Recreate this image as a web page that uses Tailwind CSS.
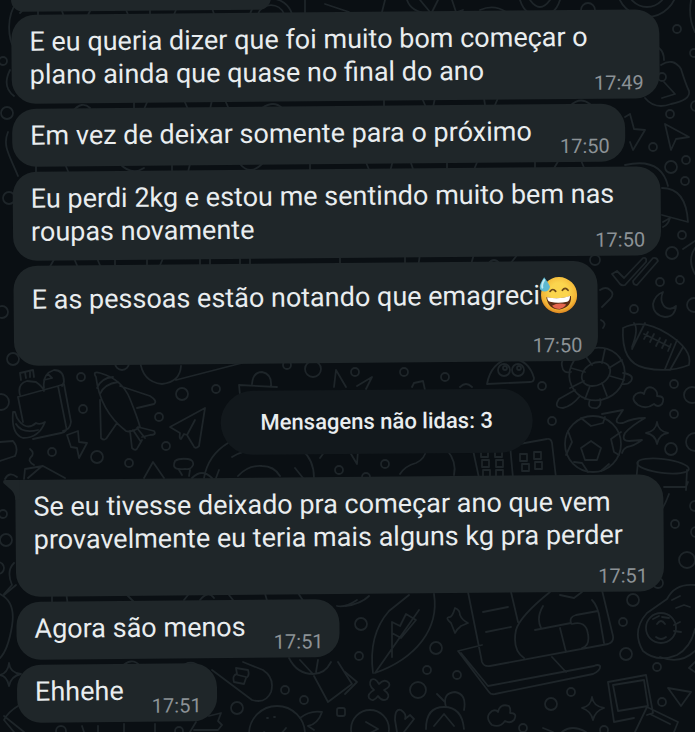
<!DOCTYPE html>
<html lang="pt-BR">
<head>
    <meta charset="UTF-8">
    <meta name="viewport" content="width=device-width, initial-scale=1.0">
    <title>Conversa</title>
    <script src="https://cdn.jsdelivr.net/npm/@tailwindcss/browser@4"></script>
</head>
<body class="bg-[#0a0f13] font-['Roboto',sans-serif]">
    <main class="relative min-h-screen overflow-hidden">

        <!-- wallpaper -->
        <svg class="absolute inset-0 w-full h-full" viewBox="0 0 695 732" preserveAspectRatio="xMidYMin slice" fill="none" stroke="#1e2529" stroke-width="1.8" stroke-linecap="round" stroke-linejoin="round" aria-hidden="true">
            <!-- small circles -->
            <circle cx="3" cy="61" r="4"/><circle cx="7" cy="113" r="6"/><circle cx="9" cy="198" r="6"/><circle cx="2" cy="312" r="6"/><circle cx="13" cy="359" r="6"/><circle cx="1" cy="402" r="8"/>
            <circle cx="81" cy="377" r="4"/><circle cx="83" cy="409" r="4"/><circle cx="52" cy="452" r="4"/><circle cx="97" cy="457" r="6"/><circle cx="129" cy="463" r="4"/><circle cx="166" cy="446" r="4"/>
            <circle cx="159" cy="417" r="4"/><circle cx="182" cy="394" r="6"/><circle cx="216" cy="389" r="4"/><circle cx="313" cy="369" r="8"/><circle cx="287" cy="365" r="4"/><circle cx="122" cy="363" r="7"/><circle cx="339" cy="470" r="4"/>
            <circle cx="677" cy="29" r="4"/><circle cx="694" cy="53" r="4"/><circle cx="670" cy="114" r="4"/><circle cx="653" cy="147" r="4"/><circle cx="671" cy="167" r="6"/><circle cx="686" cy="160" r="4"/><circle cx="685" cy="181" r="4"/><circle cx="682" cy="235" r="4"/><circle cx="696" cy="106" r="5"/>
            <circle cx="672" cy="253" r="6"/><circle cx="660" cy="282" r="4"/><circle cx="680" cy="280" r="4"/><circle cx="634" cy="309" r="4"/><circle cx="595" cy="260" r="5"/><circle cx="355" cy="372" r="4"/><circle cx="404" cy="372" r="4"/><circle cx="445" cy="377" r="4"/><circle cx="542" cy="386" r="4"/>
            <circle cx="674" cy="384" r="4"/><circle cx="674" cy="414" r="4"/><circle cx="692" cy="395" r="8"/><circle cx="694" cy="305" r="7"/><circle cx="552" cy="421" r="4"/><circle cx="671" cy="449" r="6"/><circle cx="695" cy="442" r="9"/><circle cx="385" cy="464" r="4"/><circle cx="366" cy="477" r="4"/>
            <circle cx="3" cy="514" r="4"/><circle cx="6" cy="540" r="6"/><circle cx="-2" cy="568" r="6"/><circle cx="675" cy="524" r="4"/><circle cx="695" cy="506" r="5"/><circle cx="687" cy="560" r="8"/><circle cx="696" cy="532" r="5"/><circle cx="633" cy="600" r="6"/><circle cx="658" cy="583" r="5"/><circle cx="623" cy="622" r="4"/><circle cx="626" cy="654" r="6"/><circle cx="657" cy="667" r="4"/>
            <circle cx="361" cy="624" r="6"/><circle cx="359" cy="656" r="4"/><circle cx="436" cy="648" r="6"/><circle cx="427" cy="670" r="4"/><circle cx="457" cy="675" r="4"/><circle cx="418" cy="690" r="8"/><circle cx="571" cy="692" r="4"/><circle cx="551" cy="704" r="6"/><circle cx="662" cy="702" r="4"/><circle cx="523" cy="728" r="4"/><circle cx="604" cy="730" r="4"/>
            <circle cx="285" cy="690" r="4"/><circle cx="304" cy="700" r="4"/><circle cx="237" cy="708" r="6"/><rect x="337" y="708" width="8" height="8" rx="2"/><circle cx="61" cy="731" r="5"/><circle cx="179" cy="731" r="4"/>
            <!-- top edge -->
            <path d="M17 2C6 16 8 38 14 48M10 70c-6 12-4 20 4 26M8 132c-6 14 2 24 10 44M250 14a22 22 0 0 1 42 0M258 14a14 14 0 0 1 26 0M305 0v14M325 4l24 8M385 0l-3 12M407 0q4 12 22 14t34-4M420 0l10 12M438 0l-6 12M452 0l4 12M480 10q14-6 26 2M520 0q5 16 20 16t20-16M530 0q10 14 20 0"/>
            <circle cx="588" cy="10" r="7"/><circle cx="647" cy="-13" r="30"/><circle cx="647" cy="-13" r="20"/><path d="M691 0q-3 18 4 32"/>
            <!-- marks between bubbles -->
            <path d="M20 13l6-6M38 5v12M60 5l4 12M93 5l-6 12M124 5l5 12M150 5v12M178 5l-5 12M211 5l4 12M72 112q10-12 18-4M134 100v14M148 100l-6 14M184 100l6 14M212 100l-3 14M225 100l6 14M262 108q12-8 20 0M384 98v12M422 98l6 14M435 98l-3 14M484 98l2 14M498 98l-6 14M570 106q10-10 20-2M36 164v12M65 164l5 12M120 164q12 12 24 4M172 164v12M190 164l-3 12M240 164q10 12 22 0M310 160v12M365 160l5 12M393 160l-3 12M410 160l4 12M447 160v12M478 160l-5 12M535 158v12M560 158l-7 12M580 158l5 12M48 270l8-14M73 256l6 14M96 256l6 14M115 256v14M147 256v14M158 270l6-14M200 256v14M210 256v14M240 256v14M250 256v14M340 254v14M405 254v14M420 254l-2 14M474 254l-4 14M488 264q6-8 12 0M510 264l8-10M52 592v14M66 592l2 14M122 590l14 14M184 600l8-10M200 600q8-10 14-2M225 590l8 10M264 590l4 14M296 590l8 12M120 668q12-12 20-2M180 668q8-8 16-4"/>
            <!-- lock, bolt, pointer, umbrella -->
            <path d="M659 48q5 4 5 12M661 65q12-8 20 4q5 16 8 22q2 9-18 13q-16 6-26-6"/><circle cx="662" cy="77" r="4"/><path d="M664 82l11 12-13 4M630 114l4 15 11 1-12 20-3-8M625 117l5-3M665 124l24 13-13 2-5 11zM625 165q36-8 43 21M662 188q24 0 26 34l-26-7M663 222l7-4q-2 7-7 9M695 241l-12 8"/>
            <!-- double check, moon, heart -->
            <path d="M612 274l5-3 7 7 19-20q4-1 3 4l-21 23q-3 1-5-1zM633 281l20-23q4-1 5 3l-21 24q-4 0-4-4M663 292q-4 9 2 15 6 4 11-1-1 11-11 11-12-2-12-13 2-9 10-12zM600 290q6-4 10 0 5 4 0 9l-8 8M601 320q6 3 2 8M695 248q-8 12 0 26"/>
            <!-- american football -->
            <path d="M623 328q20-10 45 6t21 31q-20 8-44 3t-22-40zM634 323q5 6-2 24M645 323l-13 26M677 340l-12 29M683 347l-13 23M644 334l26 13M648 332l-4 7M654 334l-4 8M660 338l-4 8M666 340l-4 8M671 344l-3 7"/>
            <!-- turtle -->
            <ellipse cx="597" cy="374" rx="28" ry="26" transform="rotate(-25 597 374)"/><ellipse cx="596" cy="374" rx="15" ry="11" transform="rotate(-28 596 374)"/><path d="M584 381l-14 7M590 386l-5 13M602 383l5 13M610 376l14 4M609 368l13-8M602 363l3-14M592 365l-8-11M585 372l-14-4M574 360q-14-4-12 6 1 8 9 6M575 390l-16 9q-6 9 4 9 9-2 17-12M590 400q-4 9 7 8 5-3 3-9M623 373q12 2 8 8-3 4-9 3"/>
            <!-- cloud, ghost, stars -->
            <path d="M638 405q-8-6-2-11 5-3 8 0 2-9 9-6 5 3 4 8 9 0 5 8-4 4-8 0-8 6-16 1zM487 384q4-22 24-26 18 2 23 20 0 4-4 4zM357 386l15-9-6 12M412 387l2-4 9-2 2 9M460 387q6-6 12 0"/><circle cx="504" cy="370" r="6"/><circle cx="518" cy="370" r="6"/><circle cx="505" cy="368" r="2"/><circle cx="519" cy="368" r="2"/>
            <!-- soccer ball with flames -->
            <circle cx="593" cy="444" r="28"/><path d="M591 441l10 7-4 12h-12l-4-12zM581 418l10 8 12-3 2-6M621 432l-10 7 3 13 5 3M568 431l4 11-6 13M574 462l8 1 6 9M601 471l8-7M602 414l21-4-6 9q-2 5 6 4 10-5 22-5-14 8-20 15-4 8 4 8l13-1q-8 6-15 7-4 2-5 6"/>
            <path d="M657 422q1 9 11 11-9 1-11 11-1-9-11-11 10-2 11-11z"/>
            <!-- drum, dominoes -->
            <path d="M638 462l-2 20M687 470l-1 20M660 492l-9 28q10-4 18-26M664 487h22l2-5"/><ellipse cx="663" cy="466" rx="26" ry="7" transform="rotate(7 663 466)"/><path d="M473 450l6 28M510 445l3 33M508 446l39-7q4-1 5 4l4 35"/>
            <path d="M481 450h7v7h-7zM495 450h7v7h-7zM482 460h7v7h-7zM496 460h7v7h-7zM483 470h7v7h-7zM496 470h7v7h-7zM520 454h7v7h-7zM534 452h7v7h-7zM522 464h7v7h-7zM535 462h7v7h-7z"/>
            <path d="M351 454l6 10 1-14M400 474q5-8 16-11 9-4 10-13M447 450q10 12 7 25"/>
            <!-- food bag -->
            <path d="M18 397l40-11 8 40q2 6-5 7l-28 6M18 397l5 25M58 386l6-2 7 38q-1 8-8 9M20 395q-3-11 7-14l9 1q7 5 8 9M21 380l-1-7 13-3 1 7M25 372l1 6M30 371v6M44 388q-2-14 10-18 10 0 10 12l-2 4M44 380l8-2M48 374l4 4M13 412q-2 22 10 26 16 0 22-16-5 3-9 1-10 9-19-5l-2-6zM16 424q6 10 22 6M0 442l13-1q6 7 2 15l-15 5"/>
            <!-- bolt, rocket, paper plane -->
            <path d="M67 435l11-4 1 11 8 1-8 15-2-10-6-1zM96 377q-4-6 4-4 22 6 30 26t10 28q-9 6-14 4-26-20-30-54zM97 388q4-10 16-11M100 394q4-10 18-12M120 386l30 10q8 5 4 8l-17 4M100 400l1 38q4 4 7-2l9-13M130 431l2 17q4 4 6-1l4-7M138 427l16 4q3 4-4 4l-8 2M133 430l8 12M137 428l8 10M170 427l35-19-6 38q-4 4-6-1l-6-10-3-1-3 5q-2 0-1-6zM187 435l8-15"/>
            <!-- bits around the unread label -->
            <path d="M140 360q2 22 22 24 18-2 19-18M176 380l66-17M240 395l-1-10 38 2M252 384q1-12 10-12 10 2 9 14M334 387l2-17 10 17M228 443q-20 12-24 35M232 457q10-7 26-7M302 450q12 10 12 28M295 468l8 10M320 458l5-7M238 476q10-11 24-10 12 0 18 10M219 470l-3 8M175 461q4-3 13-2 6 1 5 6-2 5-8 4-10 1-11-3 0-3 1-5zM179 470l3 5M190 470l-1 6M192 478q10-10 20 0M144 478l9-16 11 16M30 449q5 4 1 8t3 8M24 479l1-10 18-3 22 12M28 478l14-12M5 479q4-8 12-2"/>
            <!-- left side, lower -->
            <path d="M14 563q-8 8-2 22l-8 9M16 585l-12 10M0 594q16 8 12 32t-12 32M9 663q1 10 12 11-10 2-12 12-2-10-9-11 8-2 9-12zM18 706q-10 6-14 14l10 12M4 716l20 16M82 726l2 6M98 726v6M124 724v8M155 724v8M196 722l-6 10M209 716l12-3-3 8 4 4-4 5h-24"/>
            <!-- pill, balloon, smiling face -->
            <path d="M212 670l40 30q14 4 19-8 4-14-8-22l-20-8M236 668l12 2q2 6-2 8l-2 6-10-2q-2-7 3-8zM238 675l8 2M289 658q8 16 24 16 12 0 18-12M300 660l12 13M318 660l-2 12M314 676l14 26 24-18-14-22"/><circle cx="277" cy="734" r="28"/><path d="M267 718h1M274 717h1M264 732q12 10 22-4M300 718q10-8 22-6-4 12-14 14l6 4M337 606q8 2 20-6"/>
            <!-- leaf, star, plaster -->
            <path d="M373 673q-5-38 16-62l20-16M434 594q4 26-12 47t-47 32l44-63M392 622l8 4 6-12 10 6-15 18-9-5v24zM455 608q-3 10-6 9-4 1 2 6l4 10q2-4 6-7l7-3q-6-3-8-8 0-5-5-7zM345 606q16-2 24-10M345 672l12 10-12 12M371 680q4-3 8 4 6-6 10-1 2 4-5 7 7 5 3 9-5 3-9-3-5 7-9 2-2-4 5-8-6-5-3-10z"/>
            <!-- laptop -->
            <path d="M468 592l14 70q2 5 8 4l118-22q6-2 5-8l-12-50M482 645l-24 6 31 41q2 3 6 2l98-20q8-4 7-8-2-2-6 0l-106 20-27-33M552 657l14 15M511 592l7 30M483 612l25-5M486 632l25-5M560 595l14 3 8-6M592 600q6 6 8 20l4 23M550 592q-30 24-34 38-4 20 8 28M543 606q-7 12-2 22M535 630l36-7q-2-6 5-8l22-4M560 628l6 24M572 624q14-4 16 10 2 12-6 14"/>
            <!-- avocado -->
            <path d="M695 585q-20-2-28 14l-20 14q-16 18-4 38 14 12 34 4 14-8 18-26M660 657q20 8 35-6"/><circle cx="661" cy="628" r="15"/><path d="M653 619l6-3M662 617l7 1M657 624q4-6 8 0M656 637q5 4 10 0M674 625l6-3M674 631l7 1M672 600l8-4M676 608l8-3 6 2"/>
            <!-- photos, bottom bits -->
            <path d="M608 682l38-7 7 38-6 2M608 682l6 40 20-4M613 685l31-5 4 26-30 5zM647 707l31 15-4 10M647 707l-12 25M650 714l20 10M668 688l23 4-10 14zM592 697q1 9 12 11-9 3-11 12-2-9-11-12 9-2 10-11zM492 725q-8-8 0-14 4-2 6 1 2-9 11-6 2 3 1 7 8 0 4 7-4 4-9 1-5 7-13 4zM543 728l10 4M562 732q10-8 24 0M695 662l-6 6 6 4"/>
            <circle cx="370" cy="729" r="19"/><path d="M366 722l12 7-10 5M397 732l-2-12q0-12 6-10 6 4 4 9l5-4 4 4-10 13M426 729q0-22 18-22t20 22M434 726l10-12 10 12M437 694l8 8M446 707q-4-14 9-15 12 2 9 18"/>
        </svg>

        <!-- chat, slightly tilted -->
        <div class="relative flex flex-col items-start gap-[5px] pl-[11px] pr-9 origin-top-left -rotate-[0.5deg] text-[27px] leading-[33px] text-[#e9edef]">

            <div class="w-[260px] h-3 -mb-0.5 rounded-b-3xl bg-[#1f2629]"></div>

            <div class="grid w-full max-w-[648px] rounded-3xl bg-[#1f2629] pl-[18px] pr-4 pt-[11px] pb-1">
                <p class="col-start-1 row-start-1 pb-2 whitespace-nowrap">E eu queria dizer que foi muito bom começar o<br>plano ainda que quase no final do ano</p>
                <time class="col-start-1 row-start-1 self-end justify-self-end text-xl leading-6 text-[#8c9296]">17:49</time>
            </div>

            <div class="flex min-h-[58px] gap-7 rounded-3xl bg-[#1f2629] pl-[18px] pr-4 pt-[11px] pb-1">
                <p class="whitespace-nowrap">Em vez de deixar somente para o próximo</p>
                <time class="self-end text-xl leading-6 text-[#8c9296]">17:50</time>
            </div>

            <div class="grid w-full max-w-[648px] rounded-3xl bg-[#1f2629] pl-[18px] pr-4 pt-[11px] pb-1">
                <p class="col-start-1 row-start-1 pb-2 whitespace-nowrap">Eu perdi 2kg e estou me sentindo muito bem nas<br>roupas novamente</p>
                <time class="col-start-1 row-start-1 self-end justify-self-end text-xl leading-6 text-[#8c9296]">17:50</time>
            </div>

            <div class="flex flex-col gap-4 rounded-3xl bg-[#1f2629] pl-[18px] pr-4 pt-3 pb-1">
                <p class="flex h-11 items-center pr-1 whitespace-nowrap">E as pessoas estão notando que emagreci
                    <svg class="size-[38px] shrink-0" viewBox="0 0 40 40" role="img" aria-label="rosto sorridente com gota de suor">
                        <defs>
                            <radialGradient id="face" cx="0.5" cy="0.4" r="0.6">
                                <stop offset="0.4" stop-color="#fbd54e"/>
                                <stop offset="0.8" stop-color="#f3b536"/>
                                <stop offset="1" stop-color="#dc8420"/>
                            </radialGradient>
                        </defs>
                        <circle cx="20.500" cy="20" r="19" fill="url(#face)"/>
                        <path d="M11 16q3-4 6 0M24 15q3-4 6 0" fill="none" stroke="#6b4718" stroke-width="1.800" stroke-linecap="round"/>
                        <path d="M7 22q13 3 26-1 1 12-12 14Q9 35 7 22z" fill="#5b2d16"/>
                        <path d="M8 22q12 3 24-1 0 5-3 6-9 2-18 0-3-1-3-5z" fill="#fff"/>
                        <path d="M13 31q7-4 15-1-3 4-7 4.500-5 0-8-3.500z" fill="#e5654e"/>
                        <path d="M5 1Q0 8 0 12q1 4 5.500 4T11 11Q10 8 5 1z" fill="#5cb8d0"/>
                        <path d="M5 4q-3 5-2 8" fill="none" stroke="#c0eaf3" stroke-width="2" stroke-linecap="round"/>
                    </svg>
                </p>
                <time class="self-end text-xl leading-6 text-[#8c9296]">17:50</time>
            </div>

            <div class="flex w-full max-w-[648px] justify-center pl-[76px] pt-[22px] pb-[18px]">
                <div class="rounded-full bg-[#12181c] px-10 py-5 text-[22px] leading-6 font-medium whitespace-nowrap">Mensagens não lidas: 3</div>
            </div>

            <div class="relative flex flex-col gap-3 w-full max-w-[648px] rounded-3xl rounded-tl-none bg-[#1f2629] pl-[18px] pr-4 pt-[11px] pb-1">
                <svg class="absolute top-0 -left-3 w-4 h-5" viewBox="0 0 16 20" fill="#1f2629" aria-hidden="true"><path d="M2 0h14v20h-4q0-6-4-10L0 3q-1-3 2-3z"/></svg>
                <p class="whitespace-nowrap">Se eu tivesse deixado pra começar ano que vem<br>provavelmente eu teria mais alguns kg pra perder</p>
                <time class="self-end text-xl leading-6 text-[#8c9296]">17:51</time>
            </div>

            <div class="flex min-h-[58px] gap-7 rounded-3xl bg-[#1f2629] pl-[18px] pr-4 pt-[11px] pb-1">
                <p class="whitespace-nowrap">Agora são menos</p>
                <time class="self-end text-xl leading-6 text-[#8c9296]">17:51</time>
            </div>

            <div class="flex min-h-[58px] gap-7 rounded-3xl bg-[#1f2629] pl-[18px] pr-4 pt-[11px] pb-1">
                <p class="whitespace-nowrap">Ehhehe</p>
                <time class="self-end text-xl leading-6 text-[#8c9296]">17:51</time>
            </div>
        </div>
    </main>
</body>
</html>
